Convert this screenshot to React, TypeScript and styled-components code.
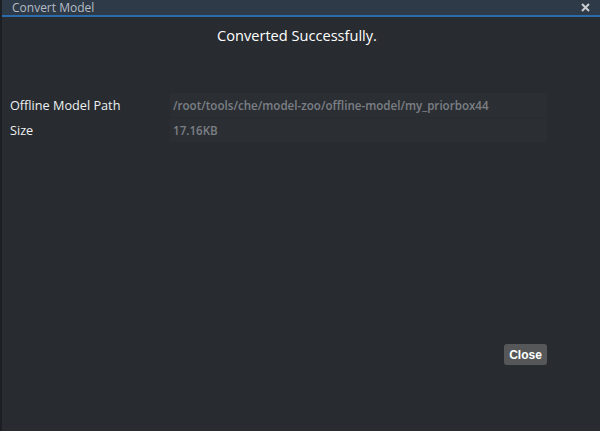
import React from "react";
import styled, { createGlobalStyle } from "styled-components";

const GlobalStyle = createGlobalStyle`
  html, body {
    margin: 0;
    padding: 0;
    background: #1c1f23;
    overflow: hidden;
  }
`;

// Page area behind the dialog (thin dark strip shows on the left)
const Screen = styled.div`
  width: 600px;
  height: 431px;
  display: flex;
  background: #1c1f23;
  padding-left: 2px;
  box-sizing: border-box;
`;

const Dialog = styled.div`
  flex: 1;
  display: flex;
  flex-direction: column;
  background: #282c31;
  font-family: "Open Sans", "Noto Sans", sans-serif;
`;

const TitleBar = styled.div`
  height: 15px;
  display: flex;
  align-items: center;
  justify-content: space-between;
  padding: 0 10px;
  background: #2e3a48;
  border-bottom: 2px solid #2b6cab;
  overflow: hidden;
`;

const Title = styled.span`
  font-size: 12px;
  color: #b5bcc4;
  line-height: 14px;
`;

const CloseX = styled.span`
  width: 10px;
  height: 10px;
  display: flex;
  align-items: center;
  justify-content: center;
`;

const Body = styled.div`
  flex: 1;
  display: flex;
  flex-direction: column;
  padding: 8px 53px 0 8px;
`;

const Heading = styled.h2`
  margin: 0;
  font-size: 14.6px;
  font-weight: 400;
  color: #ffffff;
  text-align: center;
  padding-left: 37px;
  line-height: 20px;
`;

const Table = styled.div`
  margin-top: 48px;
  display: grid;
  grid-template-columns: 160px 1fr;
  row-gap: 1px;
`;

const Label = styled.div`
  height: 24px;
  display: flex;
  align-items: center;
  font-size: 12.7px;
  color: #eef0f2;
`;

const Value = styled.div`
  height: 24px;
  display: flex;
  align-items: center;
  padding-left: 3px;
  background: #2b2f34;
  font-size: 11.6px;
  font-weight: 600;
  color: #7b7f84;
`;

const Footer = styled.div`
  margin-top: 202px;
  display: flex;
  justify-content: flex-end;
`;

const Button = styled.button`
  height: 21px;
  width: 43px;
  padding: 0;
  border: none;
  border-radius: 3px;
  background: #565758;
  color: #ffffff;
  font-family: "Liberation Sans", Arial, sans-serif;
  font-size: 12px;
  font-weight: 600;
  cursor: pointer;
`;

const App: React.FC = () => {
  return (
    <>
      <GlobalStyle />
      <Screen>
        <Dialog>
          <TitleBar>
            <Title>Convert Model</Title>
            <CloseX>
              <svg width="9" height="9" viewBox="0 0 9 9">
                <path d="M1 1L8 8M8 1L1 8" stroke="#c9cdd2" strokeWidth="2" />
              </svg>
            </CloseX>
          </TitleBar>
          <Body>
            <Heading>Converted Successfully.</Heading>
            <Table>
              <Label>Offline Model Path</Label>
              <Value>/root/tools/che/model-zoo/offline-model/my_priorbox44</Value>
              <Label>Size</Label>
              <Value>17.16KB</Value>
            </Table>
            <Footer>
              <Button>Close</Button>
            </Footer>
          </Body>
        </Dialog>
      </Screen>
    </>
  );
};

export default App;
